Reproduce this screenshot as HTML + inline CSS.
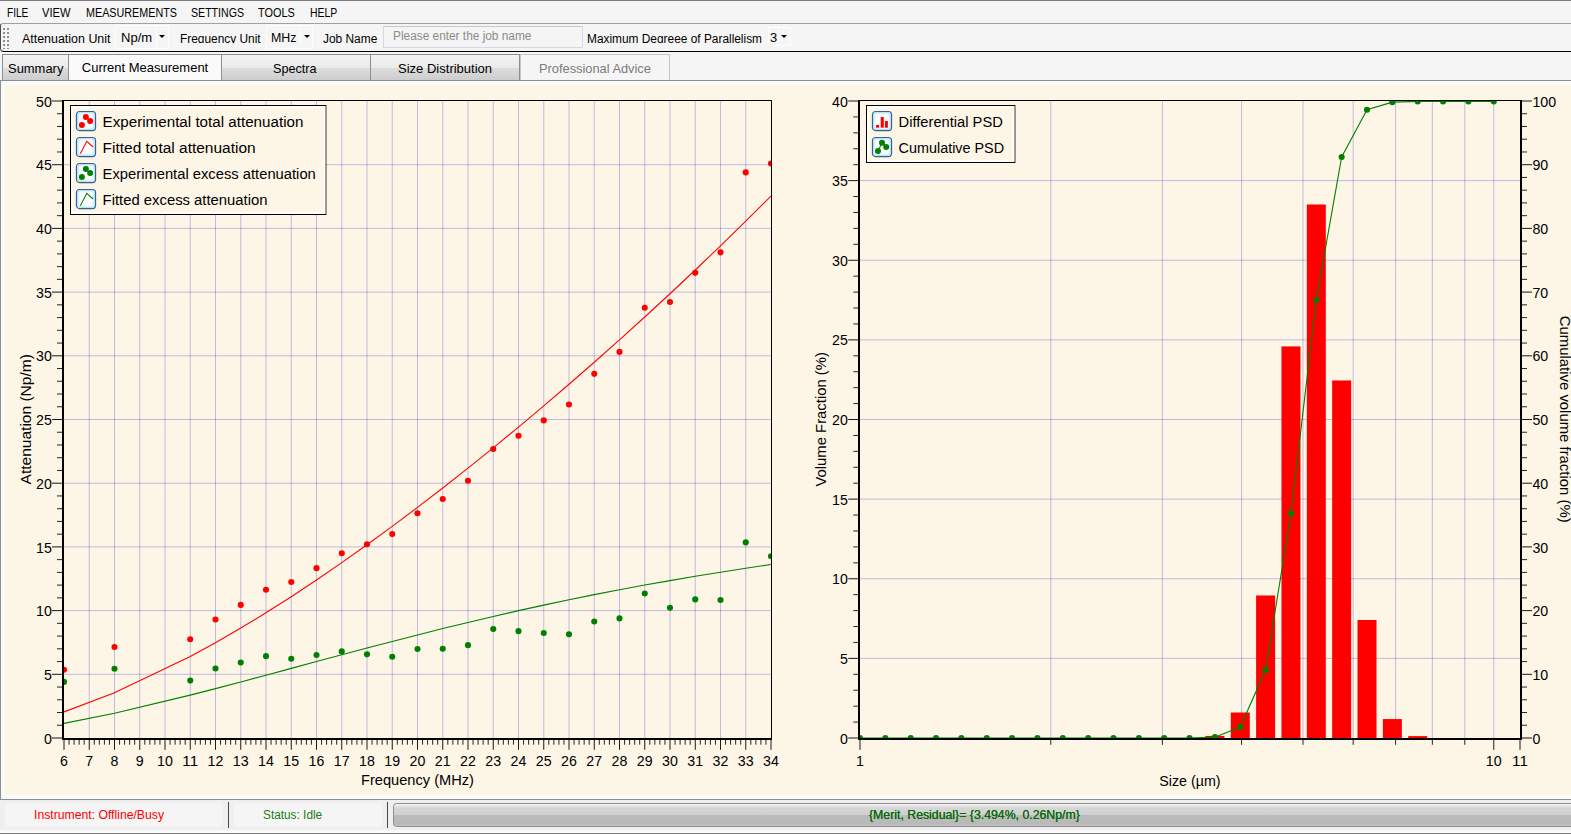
<!DOCTYPE html>
<html lang="en"><head><meta charset="utf-8"><title>Acoustic Spectrometer - Current Measurement</title>
<style>
html,body{margin:0;padding:0;overflow:hidden}
body{width:1571px;height:834px;overflow:hidden;position:relative;background:#f5f5f5;font-family:"Liberation Sans", sans-serif;font-size:12px;color:#000}
div,span{box-sizing:border-box}
.a{position:absolute}
.t{position:absolute;white-space:nowrap;line-height:1;transform-origin:0 0;display:block}
#topline{left:0;top:0;width:1571px;height:1px;background:#7c7c7c}
#menubar{left:0;top:1px;width:1571px;height:22px}
#toolbar{left:0;top:23px;width:1600px;height:29px;border-top:1px solid #a0a0a0;border-left:1px solid #4a4a4a;border-bottom:1.2px solid #000;border-radius:3px 0 0 4px;overflow:hidden}
#grip{left:2px;top:4px;width:6px;height:21px}
#grip i{position:absolute;top:0;width:2px;height:21px;background:repeating-linear-gradient(to bottom,#8f8f8f 0,#8f8f8f 2px,transparent 2px,transparent 4px)}
.combo{background:#f5f5f5;border:1px solid #fdfdfd}
.combo i{position:absolute;top:0;bottom:0;width:1px;background:#fdfdfd}
.arr{width:0;height:0;border-left:3px solid transparent;border-right:3px solid transparent;border-top:3.2px solid #000}
#jobname{left:383px;top:26px;width:200px;height:22px;border:1px solid #d3d9e6;border-top-color:#c2c7d2;background:#f5f5f5}
.tab{top:54px;height:27px;border:1px solid #8c8e94;background:linear-gradient(#f3f3f3 0,#ebebeb 51%,#dddddd 52%,#cdcdcd 100%)}
#tabline{left:0;top:80px;width:1571px;height:1px;background:#8c8e94}
#panel{left:0;top:81px;width:1600px;height:719px;background:#fafafa;border-left:1px solid #8c8e94;border-bottom:1px solid #8c8e94}
#cream{left:5px;top:85px;width:1600px;height:710px;background:#fdf5e6}
#status{left:0;top:800px;width:1571px;height:30px;background:#f0eeee}
#sfoot{left:0;top:830px;width:1571px;height:4px;background:#fafafa;border-bottom:1px solid #7e7e7e}
.sitem{top:803px;height:24px;background:#f5f5f5;border-radius:3px}
.ssep{top:802px;width:1.3px;height:26px;background:#4a4a4a}
#prog{left:393px;top:803px;width:1300px;height:24px;border:1px solid #8e8e8e;border-radius:3.5px;background:linear-gradient(#f4f4f4 0,#d6d6d6 18%,#d0d0d0 50%,#bcbcbc 52%,#b9b9b9 92%,#c8c8c8 100%)}
</style></head><body>

<div class="a" id="topline"></div>
<div class="a" id="menubar"><span class="t" style="left:6.50px;top:6.44px;font-size:12px;color:#000;transform:scaleX(0.8404);">FILE</span><span class="t" style="left:42.10px;top:6.44px;font-size:12px;color:#000;transform:scaleX(0.9325);">VIEW</span><span class="t" style="left:85.70px;top:6.44px;font-size:12px;color:#000;transform:scaleX(0.8979);">MEASUREMENTS</span><span class="t" style="left:190.70px;top:6.44px;font-size:12px;color:#000;transform:scaleX(0.8831);">SETTINGS</span><span class="t" style="left:258.10px;top:6.44px;font-size:12px;color:#000;transform:scaleX(0.9069);">TOOLS</span><span class="t" style="left:309.60px;top:6.44px;font-size:12px;color:#000;transform:scaleX(0.8674);">HELP</span></div>
<div class="a" id="toolbar"><div class="a" id="grip"><i style="left:0"></i><i style="left:4px"></i></div></div>
<div class="a combo" style="left:115.0px;top:25.0px;width:54.0px;height:24.0px"><i style="left:40.3px"></i></div>
<div class="a combo" style="left:266.0px;top:25.0px;width:47.0px;height:24.0px"><i style="left:33.0px"></i></div>
<div class="a combo" style="left:768.0px;top:27.0px;width:23.0px;height:19.0px"><i style="left:9.3px"></i></div>
<div class="a arr" style="left:159.4px;top:35.2px"></div>
<div class="a arr" style="left:303.5px;top:35.2px"></div>
<div class="a arr" style="left:781.4px;top:35.2px"></div>
<div class="a" id="jobname"></div>
<div class="a" style="left:0;top:24px;width:1571px;height:19.4px;overflow:hidden"><div class="a" style="left:0;top:-24px"><span class="t" style="left:22.00px;top:32.54px;font-size:12px;color:#000;transform:scaleX(1.0364);">Attenuation Unit</span><span class="t" style="left:180.20px;top:32.54px;font-size:12px;color:#000;transform:scaleX(0.9905);">Frequency Unit</span><span class="t" style="left:323.30px;top:32.54px;font-size:12px;color:#000;transform:scaleX(0.9926);">Job Name</span><span class="t" style="left:587.40px;top:32.54px;font-size:12px;color:#000;transform:scaleX(0.9902);">Maximum Degreee of Parallelism</span></div></div>
<span class="t" style="left:120.50px;top:32.04px;font-size:12px;color:#000;transform:scaleX(1.0847);">Np/m</span><span class="t" style="left:270.60px;top:32.04px;font-size:12px;color:#000;transform:scaleX(1.0336);">MHz</span><span class="t" style="left:769.70px;top:32.04px;font-size:12px;color:#000;transform:scaleX(1.0766);">3</span><span class="t" style="left:393.20px;top:29.84px;font-size:12px;color:#8b8b8b;transform:scaleX(0.9879);">Please enter the job name</span>
<div class="a" id="tabline"></div>
<div class="a tab" style="left:2px;width:67px"></div>
<div class="a tab" style="left:221px;width:150px"></div>
<div class="a tab" style="left:370px;width:150px"></div>
<div class="a tab" style="left:520px;width:150px;height:26px;background:#f5f5f5;border-color:#c9c7ba;border-bottom:none"></div>
<div class="a tab" style="left:68px;width:154px;background:#fafafa"></div>
<span class="t" style="left:8.20px;top:61.80px;font-size:13px;color:#000;transform:scaleX(0.9960);">Summary</span><span class="t" style="left:81.80px;top:61.10px;font-size:13px;color:#000;">Current Measurement</span><span class="t" style="left:272.90px;top:61.80px;font-size:13px;color:#000;transform:scaleX(0.9729);">Spectra</span><span class="t" style="left:397.70px;top:61.80px;font-size:13px;color:#000;transform:scaleX(1.0017);">Size Distribution</span><span class="t" style="left:538.70px;top:61.80px;font-size:13px;color:#7b7b7b;transform:scaleX(0.9863);">Professional Advice</span>
<div class="a" id="panel"></div><div class="a" id="cream"></div>
<svg width="1571" height="834" viewBox="0 0 1571 834" style="position:absolute;left:0;top:0" font-family='&quot;Liberation Sans&quot;, sans-serif'>
<defs><clipPath id="cl"><rect x="64" y="101" width="707" height="637"/></clipPath>
<clipPath id="cr"><rect x="860" y="100" width="660" height="638"/></clipPath></defs>
<path d="M89.25 101V738M114.50 101V738M139.75 101V738M165.00 101V738M190.25 101V738M215.50 101V738M240.75 101V738M266.00 101V738M291.25 101V738M316.50 101V738M341.75 101V738M367.00 101V738M392.25 101V738M417.50 101V738M442.75 101V738M468.00 101V738M493.25 101V738M518.50 101V738M543.75 101V738M569.00 101V738M594.25 101V738M619.50 101V738M644.75 101V738M670.00 101V738M695.25 101V738M720.50 101V738M745.75 101V738" stroke="#0000cd" stroke-opacity="0.24" stroke-width="1" fill="none"/>
<path d="M64 674.30H771M64 610.60H771M64 546.90H771M64 483.20H771M64 419.50H771M64 355.80H771M64 292.10H771M64 228.40H771M64 164.70H771" stroke="#0000cd" stroke-opacity="0.24" stroke-width="1" fill="none"/>
<g clip-path="url(#cl)">
<polyline fill="none" stroke="#ff0000" stroke-width="1.1" points="64.00,711.87 114.50,692.78 190.25,656.57 215.50,642.73 240.75,628.10 266.00,612.74 291.25,596.68 316.50,579.98 341.75,562.67 367.00,544.78 392.25,526.36 417.50,507.43 442.75,488.02 468.00,468.14 493.25,447.82 518.50,427.06 543.75,405.88 569.00,384.29 594.25,362.28 619.50,339.85 644.75,317.01 670.00,293.73 695.25,270.01 720.50,245.84 745.75,221.18 771.00,196.02"/>
<polyline fill="none" stroke="#008000" stroke-width="1.1" points="64.00,723.34 114.50,713.18 190.25,695.14 215.50,688.63 240.75,681.97 266.00,675.21 291.25,668.40 316.50,661.58 341.75,654.78 367.00,648.06 392.25,641.43 417.50,634.93 442.75,628.59 468.00,622.42 493.25,616.44 518.50,610.66 543.75,605.10 569.00,599.76 594.25,594.65 619.50,589.75 644.75,585.08 670.00,580.61 695.25,576.33 720.50,572.24 745.75,568.30 771.00,564.50"/>
<g fill="#ff0000"><circle cx="64.00" cy="669.78" r="3.05"/><circle cx="114.50" cy="646.96" r="3.05"/><circle cx="190.25" cy="639.18" r="3.05"/><circle cx="215.50" cy="619.54" r="3.05"/><circle cx="240.75" cy="604.88" r="3.05"/><circle cx="266.00" cy="589.71" r="3.05"/><circle cx="291.25" cy="582.06" r="3.05"/><circle cx="316.50" cy="568.16" r="3.05"/><circle cx="341.75" cy="553.24" r="3.05"/><circle cx="367.00" cy="544.32" r="3.05"/><circle cx="392.25" cy="534.12" r="3.05"/><circle cx="417.50" cy="513.21" r="3.05"/><circle cx="442.75" cy="498.93" r="3.05"/><circle cx="468.00" cy="480.82" r="3.05"/><circle cx="493.25" cy="448.95" r="3.05"/><circle cx="518.50" cy="435.69" r="3.05"/><circle cx="543.75" cy="420.39" r="3.05"/><circle cx="569.00" cy="404.45" r="3.05"/><circle cx="594.25" cy="373.85" r="3.05"/><circle cx="619.50" cy="351.92" r="3.05"/><circle cx="644.75" cy="307.68" r="3.05"/><circle cx="670.00" cy="301.94" r="3.05"/><circle cx="695.25" cy="272.87" r="3.05"/><circle cx="720.50" cy="252.34" r="3.05"/><circle cx="745.75" cy="172.40" r="3.05"/><circle cx="771.00" cy="163.48" r="3.05"/></g>
<g fill="#008000"><circle cx="64.00" cy="681.89" r="3.05"/><circle cx="114.50" cy="668.76" r="3.05"/><circle cx="190.25" cy="680.62" r="3.05"/><circle cx="215.50" cy="668.50" r="3.05"/><circle cx="240.75" cy="662.51" r="3.05"/><circle cx="266.00" cy="656.13" r="3.05"/><circle cx="291.25" cy="658.68" r="3.05"/><circle cx="316.50" cy="654.99" r="3.05"/><circle cx="341.75" cy="651.42" r="3.05"/><circle cx="367.00" cy="654.35" r="3.05"/><circle cx="392.25" cy="656.77" r="3.05"/><circle cx="417.50" cy="649.00" r="3.05"/><circle cx="442.75" cy="648.74" r="3.05"/><circle cx="468.00" cy="645.17" r="3.05"/><circle cx="493.25" cy="628.98" r="3.05"/><circle cx="518.50" cy="631.14" r="3.05"/><circle cx="543.75" cy="633.06" r="3.05"/><circle cx="569.00" cy="634.21" r="3.05"/><circle cx="594.25" cy="621.46" r="3.05"/><circle cx="619.50" cy="618.39" r="3.05"/><circle cx="644.75" cy="593.53" r="3.05"/><circle cx="670.00" cy="607.68" r="3.05"/><circle cx="695.25" cy="599.40" r="3.05"/><circle cx="720.50" cy="600.03" r="3.05"/><circle cx="745.75" cy="542.40" r="3.05"/><circle cx="771.00" cy="556.30" r="3.05"/></g>
</g>
<path d="M52 738.00H62M52 674.30H62M52 610.60H62M52 546.90H62M52 483.20H62M52 419.50H62M52 355.80H62M52 292.10H62M52 228.40H62M52 164.70H62M52 101.00H62M64.00 740V749.8M89.25 740V749.8M114.50 740V749.8M139.75 740V749.8M165.00 740V749.8M190.25 740V749.8M215.50 740V749.8M240.75 740V749.8M266.00 740V749.8M291.25 740V749.8M316.50 740V749.8M341.75 740V749.8M367.00 740V749.8M392.25 740V749.8M417.50 740V749.8M442.75 740V749.8M468.00 740V749.8M493.25 740V749.8M518.50 740V749.8M543.75 740V749.8M569.00 740V749.8M594.25 740V749.8M619.50 740V749.8M644.75 740V749.8M670.00 740V749.8M695.25 740V749.8M720.50 740V749.8M745.75 740V749.8M771.00 740V749.8" stroke="#1a1a1a" stroke-width="1" fill="none"/>
<path d="M57 725.26H62M57 712.52H62M57 699.78H62M57 687.04H62M57 661.56H62M57 648.82H62M57 636.08H62M57 623.34H62M57 597.86H62M57 585.12H62M57 572.38H62M57 559.64H62M57 534.16H62M57 521.42H62M57 508.68H62M57 495.94H62M57 470.46H62M57 457.72H62M57 444.98H62M57 432.24H62M57 406.76H62M57 394.02H62M57 381.28H62M57 368.54H62M57 343.06H62M57 330.32H62M57 317.58H62M57 304.84H62M57 279.36H62M57 266.62H62M57 253.88H62M57 241.14H62M57 215.66H62M57 202.92H62M57 190.18H62M57 177.44H62M57 151.96H62M57 139.22H62M57 126.48H62M57 113.74H62M69.05 740V744.7M74.10 740V744.7M79.15 740V744.7M84.20 740V744.7M94.30 740V744.7M99.35 740V744.7M104.40 740V744.7M109.45 740V744.7M119.55 740V744.7M124.60 740V744.7M129.65 740V744.7M134.70 740V744.7M144.80 740V744.7M149.85 740V744.7M154.90 740V744.7M159.95 740V744.7M170.05 740V744.7M175.10 740V744.7M180.15 740V744.7M185.20 740V744.7M195.30 740V744.7M200.35 740V744.7M205.40 740V744.7M210.45 740V744.7M220.55 740V744.7M225.60 740V744.7M230.65 740V744.7M235.70 740V744.7M245.80 740V744.7M250.85 740V744.7M255.90 740V744.7M260.95 740V744.7M271.05 740V744.7M276.10 740V744.7M281.15 740V744.7M286.20 740V744.7M296.30 740V744.7M301.35 740V744.7M306.40 740V744.7M311.45 740V744.7M321.55 740V744.7M326.60 740V744.7M331.65 740V744.7M336.70 740V744.7M346.80 740V744.7M351.85 740V744.7M356.90 740V744.7M361.95 740V744.7M372.05 740V744.7M377.10 740V744.7M382.15 740V744.7M387.20 740V744.7M397.30 740V744.7M402.35 740V744.7M407.40 740V744.7M412.45 740V744.7M422.55 740V744.7M427.60 740V744.7M432.65 740V744.7M437.70 740V744.7M447.80 740V744.7M452.85 740V744.7M457.90 740V744.7M462.95 740V744.7M473.05 740V744.7M478.10 740V744.7M483.15 740V744.7M488.20 740V744.7M498.30 740V744.7M503.35 740V744.7M508.40 740V744.7M513.45 740V744.7M523.55 740V744.7M528.60 740V744.7M533.65 740V744.7M538.70 740V744.7M548.80 740V744.7M553.85 740V744.7M558.90 740V744.7M563.95 740V744.7M574.05 740V744.7M579.10 740V744.7M584.15 740V744.7M589.20 740V744.7M599.30 740V744.7M604.35 740V744.7M609.40 740V744.7M614.45 740V744.7M624.55 740V744.7M629.60 740V744.7M634.65 740V744.7M639.70 740V744.7M649.80 740V744.7M654.85 740V744.7M659.90 740V744.7M664.95 740V744.7M675.05 740V744.7M680.10 740V744.7M685.15 740V744.7M690.20 740V744.7M700.30 740V744.7M705.35 740V744.7M710.40 740V744.7M715.45 740V744.7M725.55 740V744.7M730.60 740V744.7M735.65 740V744.7M740.70 740V744.7M750.80 740V744.7M755.85 740V744.7M760.90 740V744.7M765.95 740V744.7" stroke="#262626" stroke-width="1" fill="none"/>
<path d="M62 100.5H772M771.5 100V740" stroke="#000" stroke-width="1" fill="none"/>
<path d="M63 100V740M62 739H772" stroke="#000" stroke-width="2" fill="none"/>
<text x="51.90" y="743.60" font-size="14.67" text-anchor="end" textLength="7.90" lengthAdjust="spacingAndGlyphs">0</text>
<text x="51.90" y="679.90" font-size="14.67" text-anchor="end" textLength="7.90" lengthAdjust="spacingAndGlyphs">5</text>
<text x="51.90" y="616.20" font-size="14.67" text-anchor="end" textLength="15.80" lengthAdjust="spacingAndGlyphs">10</text>
<text x="51.90" y="552.50" font-size="14.67" text-anchor="end" textLength="15.80" lengthAdjust="spacingAndGlyphs">15</text>
<text x="51.90" y="488.80" font-size="14.67" text-anchor="end" textLength="15.80" lengthAdjust="spacingAndGlyphs">20</text>
<text x="51.90" y="425.10" font-size="14.67" text-anchor="end" textLength="15.80" lengthAdjust="spacingAndGlyphs">25</text>
<text x="51.90" y="361.40" font-size="14.67" text-anchor="end" textLength="15.80" lengthAdjust="spacingAndGlyphs">30</text>
<text x="51.90" y="297.70" font-size="14.67" text-anchor="end" textLength="15.80" lengthAdjust="spacingAndGlyphs">35</text>
<text x="51.90" y="234.00" font-size="14.67" text-anchor="end" textLength="15.80" lengthAdjust="spacingAndGlyphs">40</text>
<text x="51.90" y="170.30" font-size="14.67" text-anchor="end" textLength="15.80" lengthAdjust="spacingAndGlyphs">45</text>
<text x="51.90" y="106.60" font-size="14.67" text-anchor="end" textLength="15.80" lengthAdjust="spacingAndGlyphs">50</text>
<text x="64.00" y="766.00" font-size="14.67" text-anchor="middle" textLength="7.90" lengthAdjust="spacingAndGlyphs">6</text>
<text x="89.25" y="766.00" font-size="14.67" text-anchor="middle" textLength="7.90" lengthAdjust="spacingAndGlyphs">7</text>
<text x="114.50" y="766.00" font-size="14.67" text-anchor="middle" textLength="7.90" lengthAdjust="spacingAndGlyphs">8</text>
<text x="139.75" y="766.00" font-size="14.67" text-anchor="middle" textLength="7.90" lengthAdjust="spacingAndGlyphs">9</text>
<text x="165.00" y="766.00" font-size="14.67" text-anchor="middle" textLength="15.80" lengthAdjust="spacingAndGlyphs">10</text>
<text x="190.25" y="766.00" font-size="14.67" text-anchor="middle" textLength="15.80" lengthAdjust="spacingAndGlyphs">11</text>
<text x="215.50" y="766.00" font-size="14.67" text-anchor="middle" textLength="15.80" lengthAdjust="spacingAndGlyphs">12</text>
<text x="240.75" y="766.00" font-size="14.67" text-anchor="middle" textLength="15.80" lengthAdjust="spacingAndGlyphs">13</text>
<text x="266.00" y="766.00" font-size="14.67" text-anchor="middle" textLength="15.80" lengthAdjust="spacingAndGlyphs">14</text>
<text x="291.25" y="766.00" font-size="14.67" text-anchor="middle" textLength="15.80" lengthAdjust="spacingAndGlyphs">15</text>
<text x="316.50" y="766.00" font-size="14.67" text-anchor="middle" textLength="15.80" lengthAdjust="spacingAndGlyphs">16</text>
<text x="341.75" y="766.00" font-size="14.67" text-anchor="middle" textLength="15.80" lengthAdjust="spacingAndGlyphs">17</text>
<text x="367.00" y="766.00" font-size="14.67" text-anchor="middle" textLength="15.80" lengthAdjust="spacingAndGlyphs">18</text>
<text x="392.25" y="766.00" font-size="14.67" text-anchor="middle" textLength="15.80" lengthAdjust="spacingAndGlyphs">19</text>
<text x="417.50" y="766.00" font-size="14.67" text-anchor="middle" textLength="15.80" lengthAdjust="spacingAndGlyphs">20</text>
<text x="442.75" y="766.00" font-size="14.67" text-anchor="middle" textLength="15.80" lengthAdjust="spacingAndGlyphs">21</text>
<text x="468.00" y="766.00" font-size="14.67" text-anchor="middle" textLength="15.80" lengthAdjust="spacingAndGlyphs">22</text>
<text x="493.25" y="766.00" font-size="14.67" text-anchor="middle" textLength="15.80" lengthAdjust="spacingAndGlyphs">23</text>
<text x="518.50" y="766.00" font-size="14.67" text-anchor="middle" textLength="15.80" lengthAdjust="spacingAndGlyphs">24</text>
<text x="543.75" y="766.00" font-size="14.67" text-anchor="middle" textLength="15.80" lengthAdjust="spacingAndGlyphs">25</text>
<text x="569.00" y="766.00" font-size="14.67" text-anchor="middle" textLength="15.80" lengthAdjust="spacingAndGlyphs">26</text>
<text x="594.25" y="766.00" font-size="14.67" text-anchor="middle" textLength="15.80" lengthAdjust="spacingAndGlyphs">27</text>
<text x="619.50" y="766.00" font-size="14.67" text-anchor="middle" textLength="15.80" lengthAdjust="spacingAndGlyphs">28</text>
<text x="644.75" y="766.00" font-size="14.67" text-anchor="middle" textLength="15.80" lengthAdjust="spacingAndGlyphs">29</text>
<text x="670.00" y="766.00" font-size="14.67" text-anchor="middle" textLength="15.80" lengthAdjust="spacingAndGlyphs">30</text>
<text x="695.25" y="766.00" font-size="14.67" text-anchor="middle" textLength="15.80" lengthAdjust="spacingAndGlyphs">31</text>
<text x="720.50" y="766.00" font-size="14.67" text-anchor="middle" textLength="15.80" lengthAdjust="spacingAndGlyphs">32</text>
<text x="745.75" y="766.00" font-size="14.67" text-anchor="middle" textLength="15.80" lengthAdjust="spacingAndGlyphs">33</text>
<text x="771.00" y="766.00" font-size="14.67" text-anchor="middle" textLength="15.80" lengthAdjust="spacingAndGlyphs">34</text>
<text x="417.50" y="785.40" font-size="14.67" text-anchor="middle" textLength="113.00" lengthAdjust="spacingAndGlyphs">Frequency (MHz)</text>
<text x="30.80" y="419.30" font-size="14.67" text-anchor="middle" textLength="130.30" lengthAdjust="spacingAndGlyphs" transform="rotate(-90 30.80 419.30)">Attenuation (Np/m)</text>
<rect x="70.5" y="105.5" width="255.4" height="109.0" fill="#fdf5e6" stroke="#000" stroke-width="1"/><rect x="72.0" y="107.0" width="252.4" height="106.0" fill="none" stroke="#fffefb" stroke-width="2"/><g transform="translate(76.0 111.0)"><rect x="0.5" y="0.5" width="19" height="19" rx="3" fill="#fff" stroke="#33668f" stroke-width="1.25"/><rect x="1.8" y="1.8" width="16.4" height="16.4" rx="2.2" fill="none" stroke="#b9e2f8" stroke-width="1.6"/><rect x="3" y="3" width="14" height="14" rx="1.5" fill="none" stroke="#e4f4fc" stroke-width="1"/><circle cx="9.9" cy="5.9" r="3" fill="#ff0000"/><circle cx="14.1" cy="10.1" r="3" fill="#ff0000"/><circle cx="5.9" cy="14.1" r="3" fill="#ff0000"/></g><text x="102.60" y="126.85" font-size="14.67" textLength="200.80" lengthAdjust="spacingAndGlyphs">Experimental total attenuation</text><g transform="translate(76.0 137.0)"><rect x="0.5" y="0.5" width="19" height="19" rx="3" fill="#fff" stroke="#33668f" stroke-width="1.25"/><rect x="1.8" y="1.8" width="16.4" height="16.4" rx="2.2" fill="none" stroke="#b9e2f8" stroke-width="1.6"/><rect x="3" y="3" width="14" height="14" rx="1.5" fill="none" stroke="#e4f4fc" stroke-width="1"/><polyline points="4.3,16.7 10.8,4.3 17.1,10" fill="none" stroke="#ff0000" stroke-width="1.1"/></g><text x="102.60" y="152.85" font-size="14.67" textLength="153.00" lengthAdjust="spacingAndGlyphs">Fitted total attenuation</text><g transform="translate(76.0 163.0)"><rect x="0.5" y="0.5" width="19" height="19" rx="3" fill="#fff" stroke="#33668f" stroke-width="1.25"/><rect x="1.8" y="1.8" width="16.4" height="16.4" rx="2.2" fill="none" stroke="#b9e2f8" stroke-width="1.6"/><rect x="3" y="3" width="14" height="14" rx="1.5" fill="none" stroke="#e4f4fc" stroke-width="1"/><circle cx="9.9" cy="5.9" r="3" fill="#008000"/><circle cx="14.1" cy="10.1" r="3" fill="#008000"/><circle cx="5.9" cy="14.1" r="3" fill="#008000"/></g><text x="102.60" y="178.85" font-size="14.67" textLength="213.20" lengthAdjust="spacingAndGlyphs">Experimental excess attenuation</text><g transform="translate(76.0 189.0)"><rect x="0.5" y="0.5" width="19" height="19" rx="3" fill="#fff" stroke="#33668f" stroke-width="1.25"/><rect x="1.8" y="1.8" width="16.4" height="16.4" rx="2.2" fill="none" stroke="#b9e2f8" stroke-width="1.6"/><rect x="3" y="3" width="14" height="14" rx="1.5" fill="none" stroke="#e4f4fc" stroke-width="1"/><polyline points="4.3,16.7 10.8,4.3 17.1,10" fill="none" stroke="#008000" stroke-width="1.1"/></g><text x="102.60" y="204.85" font-size="14.67" textLength="164.90" lengthAdjust="spacingAndGlyphs">Fitted excess attenuation</text>
<path d="M1050.78 101V738M1162.38 101V738M1241.57 101V738M1302.98 101V738M1353.17 101V738M1395.59 101V738M1432.35 101V738M1464.77 101V738M1493.77 101V738" stroke="#0000cd" stroke-opacity="0.24" stroke-width="1" fill="none"/>
<path d="M860 658.38H1520M860 578.75H1520M860 499.12H1520M860 419.50H1520M860 339.88H1520M860 260.25H1520M860 180.62H1520" stroke="#0000cd" stroke-opacity="0.24" stroke-width="1" fill="none"/>
<g clip-path="url(#cr)">
<g fill="#ff0000"><rect x="1205.41" y="735.93" width="19" height="3.07"/><rect x="1230.76" y="712.52" width="19" height="26.48"/><rect x="1256.11" y="595.47" width="19" height="143.53"/><rect x="1281.46" y="346.40" width="19" height="392.60"/><rect x="1306.81" y="204.51" width="19" height="534.49"/><rect x="1332.16" y="380.48" width="19" height="358.52"/><rect x="1357.51" y="620.00" width="19" height="119.00"/><rect x="1382.86" y="719.05" width="19" height="19.95"/><rect x="1408.21" y="736.09" width="19" height="2.91"/></g>
<polyline fill="none" stroke="#008000" stroke-width="1.1" points="860.00,738.00 885.35,738.00 910.70,738.00 936.05,738.00 961.40,738.00 986.75,738.00 1012.10,738.00 1037.45,738.00 1062.81,738.00 1088.16,738.00 1113.51,738.00 1138.86,738.00 1164.21,738.00 1189.56,738.00 1214.91,737.17 1240.26,726.98 1265.61,669.97 1290.96,513.33 1316.31,299.94 1341.66,156.93 1367.01,109.73 1392.36,102.15 1417.71,101.38 1443.07,101.38 1468.42,101.38 1493.77,101.38"/>
<g fill="#008000"><circle cx="860.00" cy="738.00" r="3.05"/><circle cx="885.35" cy="738.00" r="3.05"/><circle cx="910.70" cy="738.00" r="3.05"/><circle cx="936.05" cy="738.00" r="3.05"/><circle cx="961.40" cy="738.00" r="3.05"/><circle cx="986.75" cy="738.00" r="3.05"/><circle cx="1012.10" cy="738.00" r="3.05"/><circle cx="1037.45" cy="738.00" r="3.05"/><circle cx="1062.81" cy="738.00" r="3.05"/><circle cx="1088.16" cy="738.00" r="3.05"/><circle cx="1113.51" cy="738.00" r="3.05"/><circle cx="1138.86" cy="738.00" r="3.05"/><circle cx="1164.21" cy="738.00" r="3.05"/><circle cx="1189.56" cy="738.00" r="3.05"/><circle cx="1214.91" cy="737.17" r="3.05"/><circle cx="1240.26" cy="726.98" r="3.05"/><circle cx="1265.61" cy="669.97" r="3.05"/><circle cx="1290.96" cy="513.33" r="3.05"/><circle cx="1316.31" cy="299.94" r="3.05"/><circle cx="1341.66" cy="156.93" r="3.05"/><circle cx="1367.01" cy="109.73" r="3.05"/><circle cx="1392.36" cy="102.15" r="3.05"/><circle cx="1417.71" cy="101.38" r="3.05"/><circle cx="1443.07" cy="101.38" r="3.05"/><circle cx="1468.42" cy="101.38" r="3.05"/><circle cx="1493.77" cy="101.38" r="3.05"/></g>
</g>
<path d="M848.2 738.00H858M848.2 658.38H858M848.2 578.75H858M848.2 499.12H858M848.2 419.50H858M848.2 339.88H858M848.2 260.25H858M848.2 180.62H858M848.2 101.00H858M1522 738.00H1532M1522 674.30H1532M1522 610.60H1532M1522 546.90H1532M1522 483.20H1532M1522 419.50H1532M1522 355.80H1532M1522 292.10H1532M1522 228.40H1532M1522 164.70H1532M1522 101.00H1532M860.00 740V749.8M1493.77 740V749.8M1520.00 740V749.8" stroke="#1a1a1a" stroke-width="1" fill="none"/>
<path d="M853.3 722.08H858M853.3 706.15H858M853.3 690.23H858M853.3 674.30H858M853.3 642.45H858M853.3 626.52H858M853.3 610.60H858M853.3 594.67H858M853.3 562.83H858M853.3 546.90H858M853.3 530.98H858M853.3 515.05H858M853.3 483.20H858M853.3 467.27H858M853.3 451.35H858M853.3 435.43H858M853.3 403.57H858M853.3 387.65H858M853.3 371.72H858M853.3 355.80H858M853.3 323.95H858M853.3 308.02H858M853.3 292.10H858M853.3 276.17H858M853.3 244.32H858M853.3 228.40H858M853.3 212.48H858M853.3 196.55H858M853.3 164.70H858M853.3 148.77H858M853.3 132.85H858M853.3 116.92H858M1522 725.26H1527M1522 712.52H1527M1522 699.78H1527M1522 687.04H1527M1522 661.56H1527M1522 648.82H1527M1522 636.08H1527M1522 623.34H1527M1522 597.86H1527M1522 585.12H1527M1522 572.38H1527M1522 559.64H1527M1522 534.16H1527M1522 521.42H1527M1522 508.68H1527M1522 495.94H1527M1522 470.46H1527M1522 457.72H1527M1522 444.98H1527M1522 432.24H1527M1522 406.76H1527M1522 394.02H1527M1522 381.28H1527M1522 368.54H1527M1522 343.06H1527M1522 330.32H1527M1522 317.58H1527M1522 304.84H1527M1522 279.36H1527M1522 266.62H1527M1522 253.88H1527M1522 241.14H1527M1522 215.66H1527M1522 202.92H1527M1522 190.18H1527M1522 177.44H1527M1522 151.96H1527M1522 139.22H1527M1522 126.48H1527M1522 113.74H1527M1050.78 740V744.8M1162.38 740V744.8M1241.57 740V744.8M1302.98 740V744.8M1353.17 740V744.8M1395.59 740V744.8M1432.35 740V744.8M1464.77 740V744.8" stroke="#262626" stroke-width="1" fill="none"/>
<path d="M858 100.5H1522" stroke="#000" stroke-width="1" fill="none"/>
<path d="M859 100V740M1521 100V740M858 739H1522" stroke="#000" stroke-width="2" fill="none"/>
<text x="847.80" y="743.60" font-size="14.67" text-anchor="end" textLength="7.90" lengthAdjust="spacingAndGlyphs">0</text>
<text x="847.80" y="663.98" font-size="14.67" text-anchor="end" textLength="7.90" lengthAdjust="spacingAndGlyphs">5</text>
<text x="847.80" y="584.35" font-size="14.67" text-anchor="end" textLength="15.80" lengthAdjust="spacingAndGlyphs">10</text>
<text x="847.80" y="504.73" font-size="14.67" text-anchor="end" textLength="15.80" lengthAdjust="spacingAndGlyphs">15</text>
<text x="847.80" y="425.10" font-size="14.67" text-anchor="end" textLength="15.80" lengthAdjust="spacingAndGlyphs">20</text>
<text x="847.80" y="345.48" font-size="14.67" text-anchor="end" textLength="15.80" lengthAdjust="spacingAndGlyphs">25</text>
<text x="847.80" y="265.85" font-size="14.67" text-anchor="end" textLength="15.80" lengthAdjust="spacingAndGlyphs">30</text>
<text x="847.80" y="186.22" font-size="14.67" text-anchor="end" textLength="15.80" lengthAdjust="spacingAndGlyphs">35</text>
<text x="847.80" y="106.60" font-size="14.67" text-anchor="end" textLength="15.80" lengthAdjust="spacingAndGlyphs">40</text>
<text x="1532.40" y="743.60" font-size="14.67" textLength="7.90" lengthAdjust="spacingAndGlyphs">0</text>
<text x="1532.40" y="679.90" font-size="14.67" textLength="15.80" lengthAdjust="spacingAndGlyphs">10</text>
<text x="1532.40" y="616.20" font-size="14.67" textLength="15.80" lengthAdjust="spacingAndGlyphs">20</text>
<text x="1532.40" y="552.50" font-size="14.67" textLength="15.80" lengthAdjust="spacingAndGlyphs">30</text>
<text x="1532.40" y="488.80" font-size="14.67" textLength="15.80" lengthAdjust="spacingAndGlyphs">40</text>
<text x="1532.40" y="425.10" font-size="14.67" textLength="15.80" lengthAdjust="spacingAndGlyphs">50</text>
<text x="1532.40" y="361.40" font-size="14.67" textLength="15.80" lengthAdjust="spacingAndGlyphs">60</text>
<text x="1532.40" y="297.70" font-size="14.67" textLength="15.80" lengthAdjust="spacingAndGlyphs">70</text>
<text x="1532.40" y="234.00" font-size="14.67" textLength="15.80" lengthAdjust="spacingAndGlyphs">80</text>
<text x="1532.40" y="170.30" font-size="14.67" textLength="15.80" lengthAdjust="spacingAndGlyphs">90</text>
<text x="1532.40" y="106.60" font-size="14.67" textLength="23.70" lengthAdjust="spacingAndGlyphs">100</text>
<text x="860.00" y="766.00" font-size="14.67" text-anchor="middle" textLength="7.90" lengthAdjust="spacingAndGlyphs">1</text>
<text x="1493.77" y="766.00" font-size="14.67" text-anchor="middle" textLength="15.80" lengthAdjust="spacingAndGlyphs">10</text>
<text x="1520.00" y="766.00" font-size="14.67" text-anchor="middle" textLength="15.80" lengthAdjust="spacingAndGlyphs">11</text>
<text x="1189.90" y="785.50" font-size="14.67" text-anchor="middle" textLength="61.30" lengthAdjust="spacingAndGlyphs">Size (µm)</text>
<text x="826.50" y="419.30" font-size="14.67" text-anchor="middle" textLength="134.50" lengthAdjust="spacingAndGlyphs" transform="rotate(-90 826.50 419.30)">Volume Fraction (%)</text>
<text x="1560.20" y="419.20" font-size="14.67" text-anchor="middle" textLength="206.80" lengthAdjust="spacingAndGlyphs" transform="rotate(90 1560.20 419.20)">Cumulative volume fraction (%)</text>
<rect x="866.5" y="105.5" width="148.4" height="57.0" fill="#fdf5e6" stroke="#000" stroke-width="1"/><rect x="868.0" y="107.0" width="145.4" height="54.0" fill="none" stroke="#fffefb" stroke-width="2"/><g transform="translate(872.0 111.0)"><rect x="0.5" y="0.5" width="19" height="19" rx="3" fill="#fff" stroke="#33668f" stroke-width="1.25"/><rect x="1.8" y="1.8" width="16.4" height="16.4" rx="2.2" fill="none" stroke="#b9e2f8" stroke-width="1.6"/><rect x="3" y="3" width="14" height="14" rx="1.5" fill="none" stroke="#e4f4fc" stroke-width="1"/><rect x="4.1" y="13.9" width="2.9" height="2.8" fill="#ff0000"/><rect x="8.7" y="6" width="3.1" height="10.7" fill="#ff0000"/><rect x="12.9" y="10" width="3" height="6.7" fill="#ff0000"/></g><text x="898.60" y="126.85" font-size="14.67" textLength="104.20" lengthAdjust="spacingAndGlyphs">Differential PSD</text><g transform="translate(872.0 137.0)"><rect x="0.5" y="0.5" width="19" height="19" rx="3" fill="#fff" stroke="#33668f" stroke-width="1.25"/><rect x="1.8" y="1.8" width="16.4" height="16.4" rx="2.2" fill="none" stroke="#b9e2f8" stroke-width="1.6"/><rect x="3" y="3" width="14" height="14" rx="1.5" fill="none" stroke="#e4f4fc" stroke-width="1"/><polyline points="6,14.1 10,5.8 14.2,10" fill="none" stroke="#008000" stroke-width="1.1"/><circle cx="10" cy="5.8" r="3" fill="#008000"/><circle cx="14.2" cy="10" r="3" fill="#008000"/><circle cx="6" cy="14.1" r="3" fill="#008000"/></g><text x="898.60" y="152.85" font-size="14.67" textLength="105.50" lengthAdjust="spacingAndGlyphs">Cumulative PSD</text>
</svg>
<div class="a" id="status"></div><div class="a" id="sfoot"></div>
<div class="a sitem" style="left:5px;width:218px"></div><div class="a ssep" style="left:228px"></div>
<div class="a sitem" style="left:234px;width:148px"></div><div class="a ssep" style="left:387px"></div>
<div class="a" id="prog"></div>
<span class="t" style="left:33.60px;top:808.84px;font-size:12px;color:#ff0000;transform:scaleX(1.0169);">Instrument: Offline/Busy</span><span class="t" style="left:263.30px;top:808.84px;font-size:12px;color:#1c7a1c;transform:scaleX(0.9859);">Status: Idle</span><span class="t" style="left:869.10px;top:808.84px;font-size:12px;color:#0a6a0a;transform:scaleX(1.0243);text-shadow:0 0 0.4px #0a6a0a;">{Merit, Residual}= {3.494%, 0.26Np/m}</span>
</body></html>
